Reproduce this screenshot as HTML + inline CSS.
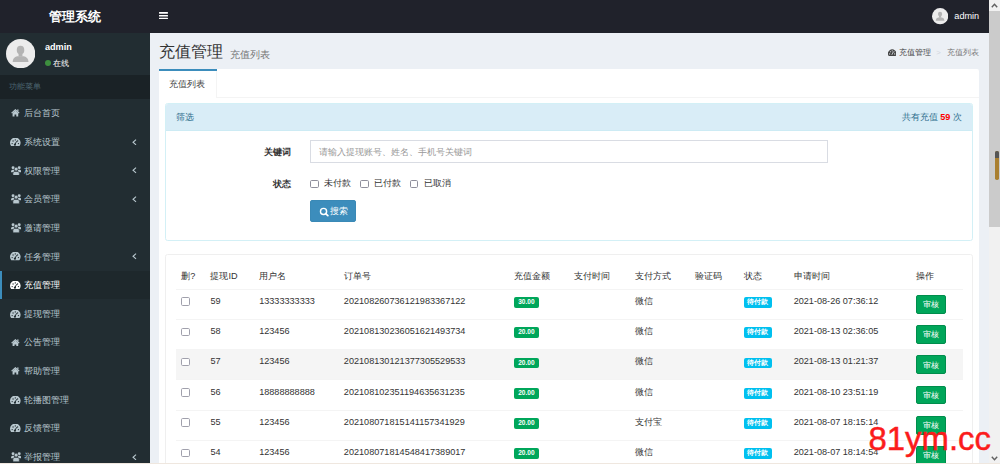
<!DOCTYPE html>
<html><head><meta charset="utf-8">
<style>
*{box-sizing:border-box;margin:0;padding:0}
html,body{width:1000px;height:464px;overflow:hidden;background:#ecf0f5}
body{font-family:"Liberation Sans",sans-serif;position:relative}
#app{position:absolute;left:0;top:0;width:1519px;height:713px;zoom:0.65104;overflow:hidden;background:#ecf0f5;font-size:14px;line-height:1.42857;color:#333}
.hdr{position:absolute;left:0;top:0;width:1519px;height:50px;background:#20222b}
.logo{position:absolute;left:0;top:0;width:230px;height:50px;line-height:53px;text-align:center;color:#fff;font-size:20px;font-weight:bold}
.bars{position:absolute;left:13px;top:18px;width:14px;height:12px}
.bars i{position:absolute;left:0;width:14px;height:2.6px;background:#fff;border-radius:1px}
.umenu{position:absolute;right:15px;top:0;height:50px;display:flex;align-items:center;color:#fff;font-size:14px}
.umenu .av{width:25px;height:25px;margin-right:10px;margin-top:1px}
.umenu span{margin-top:2px}
.side{position:absolute;left:0;top:50px;width:230px;height:663px;background:#222d32}
.upanel{position:relative;height:65px;padding:10px}
.upanel .av{position:absolute;left:9.2px;top:10px;width:45px;height:45px}
.upanel .nm{position:absolute;left:69px;top:13px;color:#fff;font-weight:bold;font-size:14px;line-height:20px}
.upanel .st{position:absolute;left:69px;top:40px;color:#fff;font-size:11.7px;line-height:16px;white-space:nowrap}
.upanel .dot{display:inline-block;width:10px;height:10px;border-radius:50%;background:#3d8f3e;margin-right:2.5px;vertical-align:-1px}
.mhead{height:37px;background:#1a2226;color:#4b646f;font-size:12px;padding:10px 25px 10px 13.3px;line-height:17px}
.menu div.it{position:relative;height:44px;line-height:20px;color:#b8c7ce;font-size:14px}
.menu div.it.act{background:#1e282c;color:#fff}
.menu div.it.act:before{content:"";position:absolute;left:0;top:0;width:3px;height:44px;background:#3c8dbc}
.menu .ic{position:absolute;left:16px;top:15px}
.menu .tx{position:absolute;left:36.2px;top:12.9px}
.menu .ar{position:absolute;left:203.3px;top:17.3px}
.content{position:absolute;left:230px;top:50px;width:1289px;height:663px}
.chead{position:absolute;left:14.6px;top:18.2px;}
.chead h1{font-size:24px;font-weight:normal;line-height:26px;color:#333}
.chead h1 small{font-size:14.7px;color:#777;padding-left:3px;position:relative;top:0.5px}
.bc{position:absolute;left:0;top:0;font-size:12px;color:#444;line-height:17px}
.bc span{position:absolute;top:22px;white-space:nowrap}
.bc .sep{color:#d2d6de}
.bc .cur{color:#777}
.box{position:absolute;left:15px;top:56px;width:1259px;height:800px;background:#fff;border-radius:3px;box-shadow:0 1px 1px rgba(0,0,0,.1)}
.tabs{height:44px;border-bottom:1px solid #f4f4f4;position:relative}
.tab{position:absolute;left:0;top:0;width:88px;height:45px;border-right:1px solid #f4f4f4;background:#fff;padding:13.8px 15px 0;color:#444;line-height:20px}
.tab:before{content:'';position:absolute;left:0;top:0;width:88px;height:3px;background:#3c8dbc}
.tc{position:absolute;left:9px;top:52.5px;width:1240px}
.pnl{position:relative;border:1px solid #d3f0f6;border-radius:4px;background:#fff;margin-bottom:20px}
.pnl-h{height:40.8px;background:#d9edf7;color:#31708f;border-bottom:1px solid #cdebf4;padding:10px 15px;line-height:20px;border-radius:3px 3px 0 0}
.pnl-h .r{float:right}
.pnl-h .r b{color:#f00}
.pnl-b{position:relative;height:168.4px}
.lab{position:absolute;right:1045.5px;font-weight:bold;line-height:20px}
.inp{position:absolute;left:221px;top:14.7px;width:795px;height:35.5px;border:1px solid #d9dce3;padding:7px 12px;color:#999;line-height:20px}
.chk{position:absolute;top:71.2px;line-height:20px;color:#333}
.cb{display:inline-block;width:13px;height:13px;border:1.5px solid #8f8f9c;border-radius:2.5px;vertical-align:top;background:#fff}
.chk .cb{margin-top:4px;margin-right:4.8px}
.btn{position:absolute;left:221px;top:106.5px;width:70.7px;height:34px;background:#3c8dbc;border:1px solid #3a89b6;border-radius:3px;color:#fff;line-height:20px;padding:6px 0 0 29.5px}
.btn svg{position:absolute;left:12px;top:9px}
.pnl2{border-color:#efefef}
.pnl2 .pnl-b{height:auto;padding:15px}
table{border-collapse:collapse;table-layout:fixed;width:1208px}
th{text-align:left;font-weight:normal;padding:8px;line-height:20px;border-bottom:2px solid #f4f4f4;color:#333}
td{padding:8px;line-height:20px;border-top:1px solid #f4f4f4;vertical-align:top;height:45px;white-space:nowrap}
tr.hov td{background:#f5f5f5}
td .cb{margin-top:4px;margin-left:0;border-color:#a0a0ac}
.lbl{display:inline-block;vertical-align:top;margin-top:3.4px;height:16.8px;font-size:10.5px;font-weight:bold;color:#fff;padding:0 6.3px;border-radius:3px;line-height:16.8px}
.lbl.ok{width:38.5px;font-weight:bold;font-size:10px;text-align:center;padding:0}
.lbl.info{width:43.5px;text-align:center;padding:0}
.lbl.ok{background:#00a65a;}
.lbl.info{background:#00c0ef}
.btn-s{display:inline-block;vertical-align:top;width:46px;height:29px;background:#00a65a;border:1px solid #008d4c;border-radius:3px;color:#fff;font-size:12px;line-height:18px;padding:5px 10px}
.sb{position:absolute;left:989px;top:0;width:11px;height:464px;background:#f1f1f1}
.sb .th{position:absolute;left:0;top:11px;width:11px;height:215.5px;background:#cbcbcb}
.sb .ov{position:absolute;left:6px;top:150.5px;width:3.6px;height:29px;border-radius:1.8px;background:#a97f30}
.sb .ov:before{content:"";position:absolute;left:0;top:0;width:100%;height:7px;background:#555;border-radius:2px 2px 0 0}
.sb svg{position:absolute;left:2px}
.wm{position:absolute;left:868.5px;top:423px;font-size:32.9px;line-height:32.9px;color:#fb1c1c;-webkit-text-stroke:0.45px #fb1c1c;font-family:"Liberation Sans",sans-serif}
.bl{position:absolute;left:0;top:463px;width:1000px;height:1px;background:#efe7df}
</style></head><body>
<div id="app">
  <div class="hdr">
    <div class="logo">管理系统</div>
    <svg style="position:absolute;left:243.9px;top:18.3px" width="13.8" height="11.5" viewBox="0 0 13.8 11.5"><rect x="0" y="0" width="13.8" height="2.6" rx="0.6" fill="#fff"/><rect x="0" y="4.45" width="13.8" height="2.6" rx="0.6" fill="#fff"/><rect x="0" y="8.9" width="13.8" height="2.6" rx="0.6" fill="#fff"/></svg>
    <div class="umenu"><div class="av"><svg width="100%" height="100%" viewBox="0 0 45 45"><circle cx="22.5" cy="22.5" r="22.5" fill="#ececec"/><ellipse cx="22.3" cy="16.8" rx="5.8" ry="6.6" fill="#b3b3b3"/><rect x="19.3" y="20" width="6" height="7" fill="#b3b3b3"/><path d="M10.2 35.2 Q10.5 28.5 17 26.6 L27.6 26.6 Q34.2 28.5 34.6 35.2 Z" fill="#b3b3b3"/></svg></div><span>admin</span></div>
  </div>
  <div class="side">
    <div class="upanel"><div class="av"><svg width="100%" height="100%" viewBox="0 0 45 45"><circle cx="22.5" cy="22.5" r="22.5" fill="#ececec"/><ellipse cx="22.3" cy="16.8" rx="5.8" ry="6.6" fill="#b3b3b3"/><rect x="19.3" y="20" width="6" height="7" fill="#b3b3b3"/><path d="M10.2 35.2 Q10.5 28.5 17 26.6 L27.6 26.6 Q34.2 28.5 34.6 35.2 Z" fill="#b3b3b3"/></svg></div><div class="nm">admin</div><div class="st"><i class="dot"></i>在线</div></div>
    <div class="mhead">功能菜单</div>
    <div class="menu">
<div class="it"><svg class="ic" style="left:16.6px;top:16.2px" width="13.5" height="11.5" viewBox="0 0 13.5 11.5"><path d="M0.9 6.3 L6.75 1.2 L12.6 6.3" fill="none" stroke="#b8c7ce" stroke-width="1.9"/><rect x="9.6" y="0.6" width="1.9" height="3.2" fill="#b8c7ce"/><path d="M2.4 6 L6.75 2.4 L11.1 6 V11.5 H8.1 V8.4 H5.4 V11.5 H2.4 Z" fill="#b8c7ce"/></svg><span class="tx">后台首页</span></div>
<div class="it"><svg class="ic" style="left:15.8px;top:15.8px" width="16.3" height="12.6" viewBox="0 0 16.3 12.6"><path d="M1.9 12.6 A8.15 8.15 0 1 1 14.4 12.6 Z" fill="#b8c7ce"/><circle cx="3.3" cy="8.6" r="1" fill="#222d32"/><circle cx="4.7" cy="4.6" r="1" fill="#222d32"/><circle cx="8.15" cy="3" r="1" fill="#222d32"/><circle cx="11.6" cy="4.6" r="1" fill="#222d32"/><circle cx="13" cy="8.6" r="1" fill="#222d32"/><path d="M7.4 10.4 L10.2 5" stroke="#222d32" stroke-width="1.5"/><circle cx="7.6" cy="10.2" r="1.7" fill="#222d32"/></svg><span class="tx">系统设置</span><svg class="ar" width="8" height="10" viewBox="0 0 8 10"><path d="M6.2 1 L1.6 5 L6.2 9" fill="none" stroke="#b8c7ce" stroke-width="1.7"/></svg></div>
<div class="it"><svg class="ic" style="left:16.4px;top:14.5px" width="15.8" height="14.9" viewBox="0 0 15.8 14.9"><circle cx="3.2" cy="2.6" r="2.3" fill="#b8c7ce"/><circle cx="12.6" cy="2.6" r="2.3" fill="#b8c7ce"/><path d="M0 8.8 Q0 5.6 2.6 5.6 H5 V9.8 H0 Z" fill="#b8c7ce"/><path d="M15.8 8.8 Q15.8 5.6 13.2 5.6 H10.8 V9.8 H15.8 Z" fill="#b8c7ce"/><circle cx="7.9" cy="4.8" r="3" fill="#b8c7ce" stroke="#222d32" stroke-width="0.8"/><path d="M3 14.9 V11.2 Q3 8.3 6 8.3 H9.8 Q12.8 8.3 12.8 11.2 V14.9 Z" fill="#b8c7ce" stroke="#222d32" stroke-width="0.8"/></svg><span class="tx">权限管理</span><svg class="ar" width="8" height="10" viewBox="0 0 8 10"><path d="M6.2 1 L1.6 5 L6.2 9" fill="none" stroke="#b8c7ce" stroke-width="1.7"/></svg></div>
<div class="it"><svg class="ic" style="left:16.4px;top:14.5px" width="15.8" height="14.9" viewBox="0 0 15.8 14.9"><circle cx="3.2" cy="2.6" r="2.3" fill="#b8c7ce"/><circle cx="12.6" cy="2.6" r="2.3" fill="#b8c7ce"/><path d="M0 8.8 Q0 5.6 2.6 5.6 H5 V9.8 H0 Z" fill="#b8c7ce"/><path d="M15.8 8.8 Q15.8 5.6 13.2 5.6 H10.8 V9.8 H15.8 Z" fill="#b8c7ce"/><circle cx="7.9" cy="4.8" r="3" fill="#b8c7ce" stroke="#222d32" stroke-width="0.8"/><path d="M3 14.9 V11.2 Q3 8.3 6 8.3 H9.8 Q12.8 8.3 12.8 11.2 V14.9 Z" fill="#b8c7ce" stroke="#222d32" stroke-width="0.8"/></svg><span class="tx">会员管理</span><svg class="ar" width="8" height="10" viewBox="0 0 8 10"><path d="M6.2 1 L1.6 5 L6.2 9" fill="none" stroke="#b8c7ce" stroke-width="1.7"/></svg></div>
<div class="it"><svg class="ic" style="left:16.4px;top:14.5px" width="15.8" height="14.9" viewBox="0 0 15.8 14.9"><circle cx="3.2" cy="2.6" r="2.3" fill="#b8c7ce"/><circle cx="12.6" cy="2.6" r="2.3" fill="#b8c7ce"/><path d="M0 8.8 Q0 5.6 2.6 5.6 H5 V9.8 H0 Z" fill="#b8c7ce"/><path d="M15.8 8.8 Q15.8 5.6 13.2 5.6 H10.8 V9.8 H15.8 Z" fill="#b8c7ce"/><circle cx="7.9" cy="4.8" r="3" fill="#b8c7ce" stroke="#222d32" stroke-width="0.8"/><path d="M3 14.9 V11.2 Q3 8.3 6 8.3 H9.8 Q12.8 8.3 12.8 11.2 V14.9 Z" fill="#b8c7ce" stroke="#222d32" stroke-width="0.8"/></svg><span class="tx">邀请管理</span></div>
<div class="it"><svg class="ic" style="left:15.8px;top:15.8px" width="16.3" height="12.6" viewBox="0 0 16.3 12.6"><path d="M1.9 12.6 A8.15 8.15 0 1 1 14.4 12.6 Z" fill="#b8c7ce"/><circle cx="3.3" cy="8.6" r="1" fill="#222d32"/><circle cx="4.7" cy="4.6" r="1" fill="#222d32"/><circle cx="8.15" cy="3" r="1" fill="#222d32"/><circle cx="11.6" cy="4.6" r="1" fill="#222d32"/><circle cx="13" cy="8.6" r="1" fill="#222d32"/><path d="M7.4 10.4 L10.2 5" stroke="#222d32" stroke-width="1.5"/><circle cx="7.6" cy="10.2" r="1.7" fill="#222d32"/></svg><span class="tx">任务管理</span><svg class="ar" width="8" height="10" viewBox="0 0 8 10"><path d="M6.2 1 L1.6 5 L6.2 9" fill="none" stroke="#b8c7ce" stroke-width="1.7"/></svg></div>
<div class="it act"><svg class="ic" style="left:15.8px;top:15.8px" width="16.3" height="12.6" viewBox="0 0 16.3 12.6"><path d="M1.9 12.6 A8.15 8.15 0 1 1 14.4 12.6 Z" fill="#fff"/><circle cx="3.3" cy="8.6" r="1" fill="#1e282c"/><circle cx="4.7" cy="4.6" r="1" fill="#1e282c"/><circle cx="8.15" cy="3" r="1" fill="#1e282c"/><circle cx="11.6" cy="4.6" r="1" fill="#1e282c"/><circle cx="13" cy="8.6" r="1" fill="#1e282c"/><path d="M7.4 10.4 L10.2 5" stroke="#1e282c" stroke-width="1.5"/><circle cx="7.6" cy="10.2" r="1.7" fill="#1e282c"/></svg><span class="tx">充值管理</span></div>
<div class="it"><svg class="ic" style="left:15.8px;top:15.8px" width="16.3" height="12.6" viewBox="0 0 16.3 12.6"><path d="M1.9 12.6 A8.15 8.15 0 1 1 14.4 12.6 Z" fill="#b8c7ce"/><circle cx="3.3" cy="8.6" r="1" fill="#222d32"/><circle cx="4.7" cy="4.6" r="1" fill="#222d32"/><circle cx="8.15" cy="3" r="1" fill="#222d32"/><circle cx="11.6" cy="4.6" r="1" fill="#222d32"/><circle cx="13" cy="8.6" r="1" fill="#222d32"/><path d="M7.4 10.4 L10.2 5" stroke="#222d32" stroke-width="1.5"/><circle cx="7.6" cy="10.2" r="1.7" fill="#222d32"/></svg><span class="tx">提现管理</span></div>
<div class="it"><svg class="ic" style="left:16.6px;top:16.2px" width="13.5" height="11.5" viewBox="0 0 13.5 11.5"><path d="M0.9 6.3 L6.75 1.2 L12.6 6.3" fill="none" stroke="#b8c7ce" stroke-width="1.9"/><rect x="9.6" y="0.6" width="1.9" height="3.2" fill="#b8c7ce"/><path d="M2.4 6 L6.75 2.4 L11.1 6 V11.5 H8.1 V8.4 H5.4 V11.5 H2.4 Z" fill="#b8c7ce"/></svg><span class="tx">公告管理</span></div>
<div class="it"><svg class="ic" style="left:16.6px;top:16.2px" width="13.5" height="11.5" viewBox="0 0 13.5 11.5"><path d="M0.9 6.3 L6.75 1.2 L12.6 6.3" fill="none" stroke="#b8c7ce" stroke-width="1.9"/><rect x="9.6" y="0.6" width="1.9" height="3.2" fill="#b8c7ce"/><path d="M2.4 6 L6.75 2.4 L11.1 6 V11.5 H8.1 V8.4 H5.4 V11.5 H2.4 Z" fill="#b8c7ce"/></svg><span class="tx">帮助管理</span></div>
<div class="it"><svg class="ic" style="left:15.8px;top:15.8px" width="16.3" height="12.6" viewBox="0 0 16.3 12.6"><path d="M1.9 12.6 A8.15 8.15 0 1 1 14.4 12.6 Z" fill="#b8c7ce"/><circle cx="3.3" cy="8.6" r="1" fill="#222d32"/><circle cx="4.7" cy="4.6" r="1" fill="#222d32"/><circle cx="8.15" cy="3" r="1" fill="#222d32"/><circle cx="11.6" cy="4.6" r="1" fill="#222d32"/><circle cx="13" cy="8.6" r="1" fill="#222d32"/><path d="M7.4 10.4 L10.2 5" stroke="#222d32" stroke-width="1.5"/><circle cx="7.6" cy="10.2" r="1.7" fill="#222d32"/></svg><span class="tx">轮播图管理</span></div>
<div class="it"><svg class="ic" style="left:15.8px;top:15.8px" width="16.3" height="12.6" viewBox="0 0 16.3 12.6"><path d="M1.9 12.6 A8.15 8.15 0 1 1 14.4 12.6 Z" fill="#b8c7ce"/><circle cx="3.3" cy="8.6" r="1" fill="#222d32"/><circle cx="4.7" cy="4.6" r="1" fill="#222d32"/><circle cx="8.15" cy="3" r="1" fill="#222d32"/><circle cx="11.6" cy="4.6" r="1" fill="#222d32"/><circle cx="13" cy="8.6" r="1" fill="#222d32"/><path d="M7.4 10.4 L10.2 5" stroke="#222d32" stroke-width="1.5"/><circle cx="7.6" cy="10.2" r="1.7" fill="#222d32"/></svg><span class="tx">反馈管理</span></div>
<div class="it"><svg class="ic" style="left:16.4px;top:14.5px" width="15.8" height="14.9" viewBox="0 0 15.8 14.9"><circle cx="3.2" cy="2.6" r="2.3" fill="#b8c7ce"/><circle cx="12.6" cy="2.6" r="2.3" fill="#b8c7ce"/><path d="M0 8.8 Q0 5.6 2.6 5.6 H5 V9.8 H0 Z" fill="#b8c7ce"/><path d="M15.8 8.8 Q15.8 5.6 13.2 5.6 H10.8 V9.8 H15.8 Z" fill="#b8c7ce"/><circle cx="7.9" cy="4.8" r="3" fill="#b8c7ce" stroke="#222d32" stroke-width="0.8"/><path d="M3 14.9 V11.2 Q3 8.3 6 8.3 H9.8 Q12.8 8.3 12.8 11.2 V14.9 Z" fill="#b8c7ce" stroke="#222d32" stroke-width="0.8"/></svg><span class="tx">举报管理</span><svg class="ar" width="8" height="10" viewBox="0 0 8 10"><path d="M6.2 1 L1.6 5 L6.2 9" fill="none" stroke="#b8c7ce" stroke-width="1.7"/></svg></div>
    </div>
  </div>
  <div class="content">
    <div class="chead"><h1>充值管理 <small>充值列表</small></h1></div>
    <div class="bc"><svg style="position:absolute;left:1133.9px;top:25.1px" width="12.9" height="10.9" viewBox="0 0 16.3 13.8"><path d="M1.5 13.8 A8.15 8.15 0 1 1 14.8 13.8 Z" fill="#444"/><circle cx="3.3" cy="9.6" r="1.1" fill="#ecf0f5"/><circle cx="4.7" cy="5.3" r="1.1" fill="#ecf0f5"/><circle cx="8.15" cy="3.6" r="1.1" fill="#ecf0f5"/><circle cx="11.6" cy="5.3" r="1.1" fill="#ecf0f5"/><circle cx="13" cy="9.6" r="1.1" fill="#ecf0f5"/><path d="M7.4 11.4 L10.2 5.8" stroke="#ecf0f5" stroke-width="1.5"/></svg><span style="left:1150.9px">充值管理</span><span class="sep" style="left:1208.1px">&gt;</span><span class="cur" style="left:1225.1px">充值列表</span></div>
    <div class="box">
      <div class="tabs"><div class="tab">充值列表</div></div>
      <div class="tc">
        <div class="pnl">
          <div class="pnl-h">筛选<span class="r">共有充值 <b>59</b> 次</span></div>
          <div class="pnl-b">
            <div class="lab" style="top:23.2px">关键词</div>
            <div class="inp">请输入提现账号、姓名、手机号关键词</div>
            <div class="lab" style="top:72.2px">状态</div>
            <div class="chk" style="left:221px"><i class="cb"></i> 未付款</div>
            <div class="chk" style="left:297.6px"><i class="cb"></i> 已付款</div>
            <div class="chk" style="left:373.6px"><i class="cb"></i> 已取消</div>
            <div class="btn"><svg width="16" height="16" viewBox="0 0 16 16"><circle cx="7" cy="6.8" r="4.7" fill="none" stroke="#fff" stroke-width="2.2"/><path d="M10.3 10.1 L13.6 13.4" stroke="#fff" stroke-width="2.6" stroke-linecap="round"/></svg>搜索</div>
          </div>
        </div>
        <div class="pnl pnl2">
          <div class="pnl-b">
            <table>
              <colgroup><col style="width:44.7px"><col style="width:74.9px"><col style="width:130.15px"><col style="width:261.1px"><col style="width:92.9px"><col style="width:93.3px"><col style="width:92.2px"><col style="width:74.9px"><col style="width:76.6px"><col style="width:187.45px"><col style="width:79.8px"></colgroup>
              <tr><th>删?</th><th>提现ID</th><th>用户名</th><th>订单号</th><th>充值金额</th><th>支付时间</th><th>支付方式</th><th>验证码</th><th>状态</th><th>申请时间</th><th>操作</th></tr>
<tr><td><i class="cb"></i></td><td>59</td><td>13333333333</td><td>202108260736121983367122</td><td><span class="lbl ok">30.00</span></td><td></td><td>微信</td><td></td><td><span class="lbl info">待付款</span></td><td>2021-08-26 07:36:12</td><td><span class="btn-s">审核</span></td></tr>
<tr><td><i class="cb"></i></td><td>58</td><td>123456</td><td>202108130236051621493734</td><td><span class="lbl ok">20.00</span></td><td></td><td>微信</td><td></td><td><span class="lbl info">待付款</span></td><td>2021-08-13 02:36:05</td><td><span class="btn-s">审核</span></td></tr>
<tr class="hov"><td><i class="cb"></i></td><td>57</td><td>123456</td><td>202108130121377305529533</td><td><span class="lbl ok">20.00</span></td><td></td><td>微信</td><td></td><td><span class="lbl info">待付款</span></td><td>2021-08-13 01:21:37</td><td><span class="btn-s">审核</span></td></tr>
<tr><td><i class="cb"></i></td><td>56</td><td>18888888888</td><td>202108102351194635631235</td><td><span class="lbl ok">20.00</span></td><td></td><td>微信</td><td></td><td><span class="lbl info">待付款</span></td><td>2021-08-10 23:51:19</td><td><span class="btn-s">审核</span></td></tr>
<tr><td><i class="cb"></i></td><td>55</td><td>123456</td><td>202108071815141157341929</td><td><span class="lbl ok">20.00</span></td><td></td><td>支付宝</td><td></td><td><span class="lbl info">待付款</span></td><td>2021-08-07 18:15:14</td><td><span class="btn-s">审核</span></td></tr>
<tr><td><i class="cb"></i></td><td>54</td><td>123456</td><td>202108071814548417389017</td><td><span class="lbl ok">20.00</span></td><td></td><td>微信</td><td></td><td><span class="lbl info">待付款</span></td><td>2021-08-07 18:14:54</td><td><span class="btn-s">审核</span></td></tr>
            </table>
          </div>
        </div>
      </div>
    </div>
  </div>
</div>
<div class="sb"><svg style="top:3px" width="7" height="5" viewBox="0 0 7 5"><path d="M0.8 4.2 L3.5 1.2 L6.2 4.2" fill="none" stroke="#606060" stroke-width="1.4"/></svg><div class="th"></div><div class="ov"></div><svg style="top:456px" width="7" height="5" viewBox="0 0 7 5"><path d="M0.8 0.8 L3.5 3.8 L6.2 0.8" fill="none" stroke="#606060" stroke-width="1.4"/></svg></div>
<div class="wm">81ym.cc</div>
<div class="bl"></div>
</body></html>
